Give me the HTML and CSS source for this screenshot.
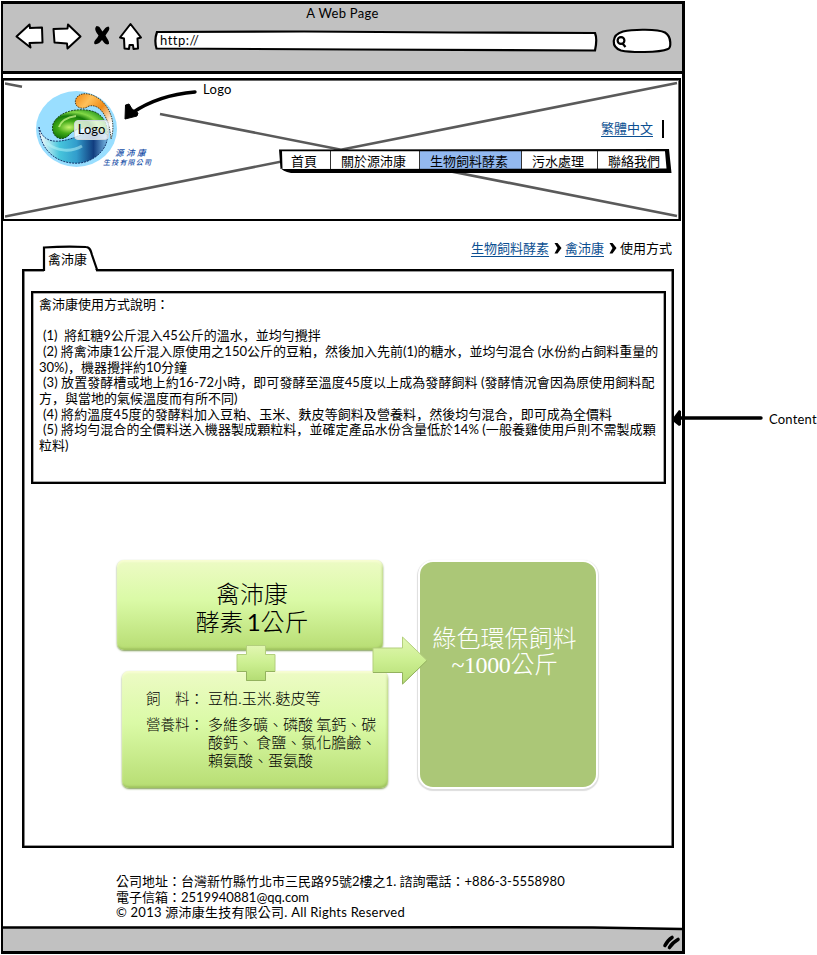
FILE: index.html
```html
<!DOCTYPE html>
<html>
<head>
<meta charset="utf-8">
<title>A Web Page</title>
<link rel="stylesheet" href="styles.css">
</head>
<body>
<div class="window">
  <header class="chrome">
    <div class="title">A Web Page</div>
    <div class="toolbar">
      <svg class="icons" width="130" height="30" viewBox="0 0 130 30" fill="#fff" stroke="#000" stroke-width="2" stroke-linejoin="round">
        <path d="M2.500 14.500 15.500 2.500 16 6 28 5.500 28.500 20.500 15.500 21 16.500 25.500Z"/>
        <path d="M39.500 7 53.500 6.500 54 2.500 66.500 14.500 53.500 26.500 53 21.500 40.500 20.500Z"/>
        <g fill="#000" stroke="none"><path d="M82.500 4C86 4 86.500 7 88.500 9.500 90.500 7 92 4.500 94.500 4.500 97 7 93.500 10 91.500 13.500 93 16.500 95.500 19 95 22 91.500 23.500 90 20.500 88 18 86 20.500 83.500 23 80.500 22 79 19 83.500 16.500 84.500 13.500 82.500 10.500 79.500 7 82.500 4Z"/></g>
        <path d="M116.500 2 127 15.500 123.500 16.500 124 26.500 119.500 27 119 23 115.500 23 115 27 110.500 26.500 110 16.500 106 15.500Z"/>
      </svg>
      <div class="url"><svg width="444" height="22" viewBox="0 0 444 22"><path d="M3 2 150 1.500 300 2.500 441 3Q443.500 9 441 20.500L200 19.500 2.500 18.500Q0 10 3 2Z" fill="#fff" stroke="#000" stroke-width="2.200"/></svg><span>http://</span></div>
      <svg class="search" width="62" height="26" viewBox="0 0 62 26" fill="none" stroke="#000" stroke-width="2.200"><path d="M12 3.500C22 1 47 1 54 4.500 61 9 60 20 57 21 48 25 19 24.500 10 22.500 0 19 0 7 12 3.500Z" fill="#fff"/><circle cx="10" cy="12.500" r="3.400"/><path d="M11.500 15.500 14.500 19"/></svg>
    </div>
  </header>

  <section class="banner">
    <svg class="cross" width="674" height="138" viewBox="0 0 674 138" stroke="#5a5a5a" stroke-width="2.600"><path d="M0 2.500 17 5.700M155 33 672 135M0 135.500 672 2"/></svg>
    <div class="brand">
      <svg width="82" height="78" viewBox="0 0 82 78">
        <defs>
          <linearGradient id="orange" x2="1" y2="1"><stop stop-color="#ef8410"/><stop offset=".25" stop-color="#ffc15a"/><stop offset=".5" stop-color="#f08b18"/><stop offset=".8" stop-color="#fff"/></linearGradient>
          <radialGradient id="green" cx=".3" cy=".6" r=".7"><stop stop-color="#c3f36d"/><stop offset=".3" stop-color="#41aa17"/><stop offset=".55" stop-color="#157a09"/><stop offset=".75" stop-color="#83d847"/><stop offset="1" stop-color="#32a022"/></radialGradient>
          <linearGradient id="blue"><stop stop-color="#fff"/><stop offset=".3" stop-color="#47c5dc"/><stop offset=".55" stop-color="#329dcc"/><stop offset=".8" stop-color="#113d7f"/><stop offset="1" stop-color="#78b8e5"/></linearGradient>
        </defs>
        <ellipse cx="40.500" cy="39" rx="40.500" ry="38" fill="#99deff"/>
        <path d="M53 16C46 21 38 17 39.500 10 42 2 53 2 62 8 75 17 80 34 75 49 74 34 67 13 53 16Z" fill="url(#orange)" stroke="#2b1a08" stroke-width=".8" stroke-dasharray="1.500 1"/>
        <path d="M33 45C24 54 14 45 17 34 23 20 45 17 59 22 70 27 73 39 71 49 64 37 42 34 33 45Z" fill="url(#green)" stroke="#133a13" stroke-width=".9" stroke-dasharray="2 1"/>
        <path d="M23 37Q26 28 40 26" fill="none" stroke="#d9ff97" stroke-width="2" opacity=".7"/>
        <path d="M3 37C7 54 22 53 37 48 52 42 64 38 71 45 73 57 60 71 44 73 23 75 4 62 3 37Z" fill="url(#blue)" stroke="#07245c" stroke-width=".9" stroke-dasharray="2 1"/>
        <path d="M11 53C21 62 36 62 46 56" fill="none" stroke="#bdf7fa" stroke-width="3" opacity=".5"/>
      </svg>
      <span class="chip">Logo</span>
      <span class="company">源沛康</span>
      <span class="company small">生技有限公司</span>
    </div>
    <div class="menus">
      <div class="lang"><a>繁體中文</a><i></i></div>
      <nav><span>首頁</span><span>關於源沛康</span><span class="active">生物飼料酵素</span><span>污水處理</span><span>聯絡我們</span>
        <svg width="394" height="27" viewBox="0 0 394 27"><path d="M0 .5 390 0 392.500 24H12Q3 22 1.500 18.500L3 20 387.500 19.500 386 2.200H3L3.500 20H1.500Z"/></svg>
      </nav>
    </div>
  </section>

  <div class="heading">
    <div class="tab"><svg width="57" height="28" viewBox="0 0 57 28"><path d="M2 28V2.500L44 2 55 28Z" fill="#fff"/><path d="M2 26V2.500Q24 1 44 2C48 2 49 6 50 10L55.500 26" fill="none" stroke="#000" stroke-width="2.200"/></svg><span>禽沛康</span></div>
    <div class="crumbs"><a>生物飼料酵素</a><svg width="8" height="12" viewBox="0 0 8 12"><path d="M.5 1H3.500L7.500 6 3.500 11.500H.5L3.500 6Z"/></svg><a>禽沛康</a><svg width="8" height="12" viewBox="0 0 8 12"><path d="M.5 1H3.500L7.500 6 3.500 11.500H.5L3.500 6Z"/></svg><span>使用方式</span></div>
  </div>

  <main>
    <section class="steps">
      <div class="lead">禽沛康使用方式說明：</div>
      <div>&nbsp;</div>
      <div class="item">(1)&nbsp; 將紅糖9公斤混入45公斤的溫水，並均勻攪拌</div>
      <div class="item">(2) 將禽沛康1公斤混入原使用之150公斤的豆粕，然後加入先前(1)的糖水，並均勻混合 (水份約占飼料重量的</div>
      <div>30%)，機器攪拌約10分鐘</div>
      <div class="item wide">(3) 放置發酵槽或地上約16-72小時，即可發酵至溫度45度以上成為發酵飼料 (發酵情況會因為原使用飼料配</div>
      <div>方，與當地的氣候溫度而有所不同)</div>
      <div class="item wide">(4) 將約溫度45度的發酵料加入豆粕、玉米、麩皮等飼料及營養料，然後均勻混合，即可成為全價料</div>
      <div class="item wide">(5) 將均勻混合的全價料送入機器製成顆粒料，並確定產品水份含量低於14% (一般養雞使用戶則不需製成顆</div>
      <div>粒料)</div>
    </section>
    <section class="diagram">
      <div class="inputs">
        <div class="card enzyme"><div>禽沛康</div><div>酵素 <b>1</b>公斤</div></div>
        <div class="card feed">
          <div class="term">飼　料：</div><div>豆柏.玉米.麩皮等</div>
          <div class="term">營養料：</div><div>多維多礦、磷酸 氧鈣、碳<br>酸鈣、 食鹽、氯化膽鹼、<br>賴氨酸、蛋氨酸</div>
        </div>
      </div>
      <div class="result"><div>綠色環保飼料</div><div class="qty">~1000公斤</div></div>
      <svg class="joins" width="200" height="60" viewBox="0 0 200 60">
        <defs><linearGradient id="lime" x2="0" y2="1"><stop stop-color="#e2f7b2"/><stop offset=".5" stop-color="#ccef91"/><stop offset="1" stop-color="#b4dc74"/></linearGradient></defs>
        <g fill="url(#lime)" stroke="#b3cf7d" stroke-width="1"><path d="M10.500 10.500H29.500V19.500H39V36.500H29.500V45.500H10.500V36.500H1V19.500H10.500Z"/><path d="M137 13H166.500V2L191 25.500 166.500 49V37.500H137Z"/></g>
        <path d="M1 36.500H10.500V45.500H29.500V36.500H39M137 37.500H166.500V49L191 25.500" fill="none" stroke="#93b25e"/>
      </svg>
    </section>
  </main>

  <footer>
    <div>公司地址：台灣新竹縣竹北市三民路95號2樓之1. 諮詢電話：+886-3-5558980</div>
    <div>電子信箱：2519940881@qq.com</div>
    <div class="rights">© 2013 源沛康生技有限公司. All Rights Reserved</div>
  </footer>
  <div class="status"><svg width="679" height="25" viewBox="0 0 679 25"><path d="M0 1 250 1 480 .8 590 1 679 3V25H0Z" fill="#c1c1c1"/><path d="M0 1.500 250 1.500 480 1.200 590 1.500 679 3" fill="none" stroke="#000" stroke-width="2.400"/><path d="M662 19.500Q665 14 669 11.500M666.500 21.500Q669 17 675 13.500" fill="none" stroke="#000" stroke-width="3.600" stroke-linecap="round"/></svg></div>
</div>

<div class="note note-logo"><svg width="74" height="36" viewBox="0 0 74 36"><path d="M71 4C47 6 24 14 8 25" fill="none" stroke="#000" stroke-width="3.400" stroke-linecap="round"/><path d="M1 31 1.500 17 5 16 8 21 14 25 13 28Z" stroke="#000" stroke-linejoin="round"/></svg><span>Logo</span></div>
<div class="note note-content"><svg width="92" height="18" viewBox="0 0 92 18"><path d="M3 9H88" stroke="#000" stroke-width="3.400" stroke-linecap="round"/><path d="M0 9 6 1 8 2 8 16 6 17 1 13Z"/></svg><span>Content</span></div>
</body>
</html>
```
FILE: styles.css
```css
* { box-sizing: border-box; }
body {
  margin: 0;
  width: 817px;
  height: 955px;
  padding: 1px 0 0 1px;
  overflow: hidden;
  position: relative;
  background: #fff;
  color: #000;
  font: 13px/16px Lato, "Noto Sans CJK TC", sans-serif;
}
svg { display: block; flex: none; }
a { color: #0b4f91; text-decoration: underline; text-underline-offset: 3px; }

.window {
  width: 684px;
  height: 953px;
  border: 3px solid #000;
  border-left-width: 2px;
  display: flex;
  flex-direction: column;
}

/* browser bar */
.chrome { height: 70px; background: #c1c1c1; border-bottom: 3px solid #000; flex: none; }
.title { text-align: center; padding-top: 1px; height: 18px; letter-spacing: .3px; }
.toolbar { display: flex; align-items: flex-start; }
.icons { margin-left: 11px; }
.url { display: grid; width: 444px; margin: 8px 0 0 10px; }
.url svg, .url span { grid-area: 1 / 1; }
.url span { padding: 2px 0 0 6px; letter-spacing: .5px; }
.search { margin: 6px 0 0 13px; }

/* banner */
.banner {
  display: flex;
  position: relative;
  height: 143px;
  margin: 4px 0 0 -1px;
  width: 679px;
  border: 2px solid #000;
  box-shadow: inset -1px 0 0 #666, inset 0 1px 0 #666;
  flex: none;
}
.cross { position: absolute; left: 1px; top: 1px; fill: none; }
.brand { position: relative; width: 126px; margin: 10px 0 0 32px; }
.chip {
  position: absolute;
  left: 38px;
  top: 30px;
  width: 35px;
  height: 20px;
  border: 1px solid #ccd6dc;
  border-radius: 4px;
  background: rgba(255, 255, 255, .76);
  text-align: center;
  line-height: 17px;
}
.company {
  position: absolute;
  left: 79px;
  top: 57px;
  font: italic 500 8.500px/10px "Noto Sans CJK TC", sans-serif;
  letter-spacing: 2.500px;
  color: #1750a8;
  white-space: nowrap;
}
.company.small { left: 67px; top: 67px; font-size: 7px; letter-spacing: 1.200px; }
.menus { position: relative; margin-left: 117px; width: 394px; padding-top: 40px; }
.lang { display: flex; justify-content: flex-end; padding-right: 9px; height: 28px; }
.lang i { width: 2px; height: 18px; background: #000; margin-left: 9px; }
nav { display: flex; position: relative; margin-top: 2px; padding: 0 0 0 3px; height: 25px; white-space: nowrap; }
nav span { background: #fff; padding: 3px 0 0 10px; border-right: 1px solid #333; height: 21px; }
nav span:first-child { padding-left: 9px; width: 49px; }
nav span:nth-child(2) { width: 89px; }
nav span:nth-child(3) { width: 102px; }
nav span:nth-child(4) { width: 76px; }
nav span:nth-child(5) { width: 71px; border: 0; }
nav .active { background: #93b9f0; }
nav svg { position: absolute; left: 0; top: -1px; fill-rule: evenodd; }

/* tab and breadcrumb */
.heading { display: flex; justify-content: space-between; height: 51px; margin-bottom: -3px; position: relative; flex: none; }
.tab { display: grid; margin: 24px 0 0 39px; height: 28px; }
.tab svg, .tab span { grid-area: 1 / 1; }
.tab span { padding: 6px 0 0 6px; }
.crumbs { display: flex; align-items: center; height: 16px; margin: 19px 10px 0 0; }
.crumbs svg { margin: 0 3px 0 5px; }

main { width: 652px; height: 579px; margin: 0 0 0 19px; border: 2px solid #000; box-shadow: inset 0 0 0 .6px #333; flex: none; }
.steps {
  margin: 20px 0 0 7px;
  width: 635px;
  height: 193px;
  border: 2px solid #000;
  box-shadow: inset 0 0 0 .5px #555;
  padding: 4px 0 0 6px;
  font-family: Lato, "Noto Sans CJK SC", sans-serif;
  line-height: 15.650px;
  white-space: nowrap;
}
.steps .lead { font-family: Lato, "Noto Sans CJK TC", sans-serif; }
.steps .item { padding-left: 4px; }
.steps .wide { letter-spacing: .07px; }

/* mixing diagram */
.diagram { display: flex; position: relative; margin: 76px 0 0 93px; width: 482px; }
.inputs { width: 271px; }
.card {
  width: 266px;
  border-radius: 7px;
  background: linear-gradient(#edfbc5, #dafaa6 45%, #b7dd73);
  box-shadow: 0 1px 2px #7f9b54, inset 0 2px 2px rgba(255, 255, 220, .6), inset -1px -2px 2px rgba(145, 180, 85, .6);
}
.enzyme { height: 90px; padding: 19px 0 0 4px; text-align: center; font: 300 24px/28px "Noto Sans CJK TC", sans-serif; }
.enzyme b { font: 24px/28px Lato, sans-serif; margin-left: -2px; }
.feed {
  display: grid;
  grid-template-columns: 62px 1fr;
  grid-template-rows: 26px auto;
  height: 117px;
  margin: 21px 0 0 5px;
  padding: 18px 0 0 24px;
  font: 300 15px/18px "Noto Sans CJK TC", sans-serif;
  white-space: nowrap;
}
.term { font-size: 14.500px; }
.result {
  margin-left: 30px;
  width: 180px;
  height: 229px;
  border: 2px solid #fff;
  border-radius: 15px;
  background: #abc777;
  box-shadow: 0 1px 1px 1px #ddd;
  color: #fff;
  padding: 61px 7px 0 0;
  text-align: center;
  font: 300 24px/28px "Noto Sans CJK TC", sans-serif;
}
.qty { font-family: "Liberation Serif", "Noto Sans CJK TC", serif; letter-spacing: -.4px; }
.joins { position: absolute; left: 119px; top: 75px; overflow: visible; }

footer { margin: 26px 0 0 113px; height: 52px; line-height: 15.700px; white-space: nowrap; }
.rights { letter-spacing: .23px; }
.status { margin-top: auto; flex: none; }

/* callouts */
.note { position: absolute; display: flex; }
.note-logo { left: 124px; top: 88px; }
.note-logo span { margin: -7px 0 0 5px; letter-spacing: .3px; }
.note-content { left: 673px; top: 409px; }
.note-content span { margin: 2px 0 0 4px; letter-spacing: .2px; }
```
